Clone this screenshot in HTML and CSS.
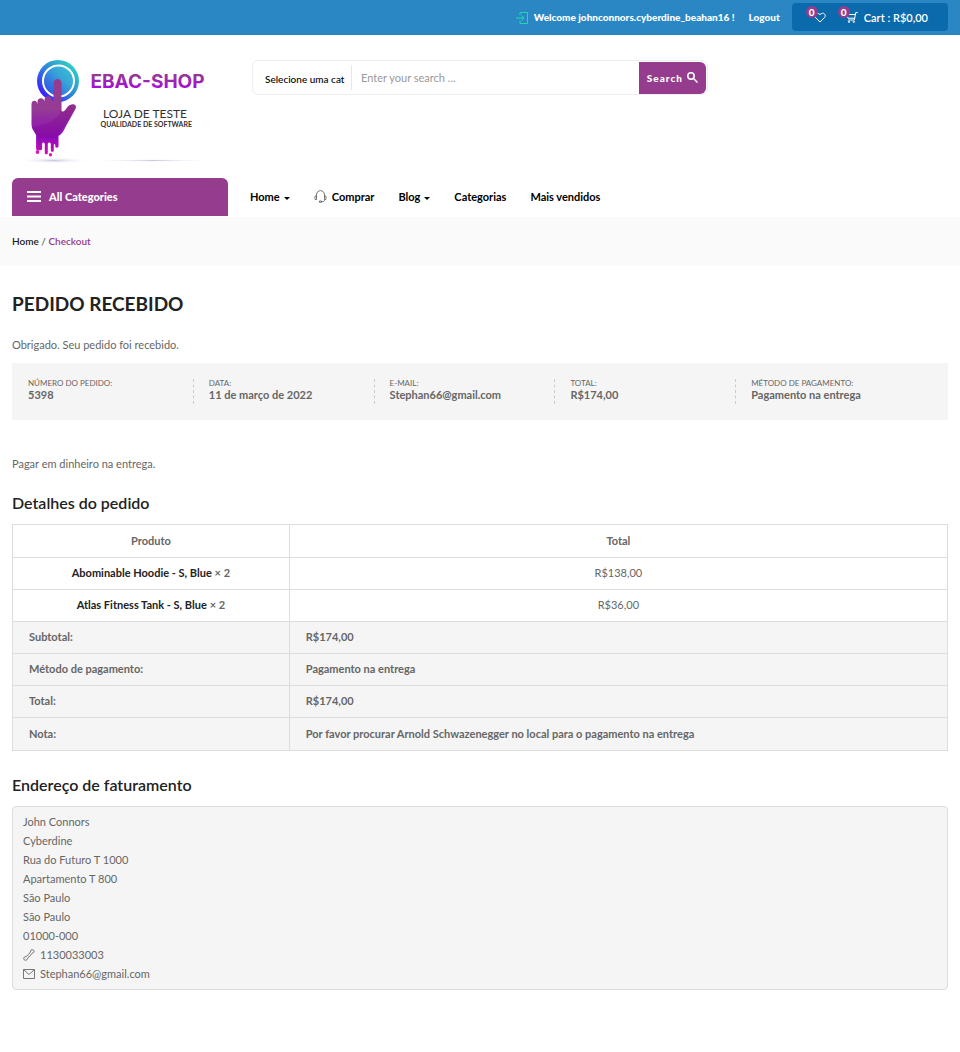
FILE: index.html
```html
<!DOCTYPE html>
<html lang="pt-BR">
<head>
<meta charset="utf-8">
<meta name="viewport" content="width=device-width, initial-scale=1">
<title>Pedido recebido - EBAC-SHOP</title>
<link rel="stylesheet" href="styles.css">
</head>
<body>
<div class="topbar">
  <svg class="login-icon" viewBox="0 0 12 12" aria-hidden="true"><path d="M4 3V.5h7.500v11H4V9M0 6h8M5.500 3.500 8 6 5.500 8.500"/></svg>
  <span class="welcome">Welcome johnconnors.cyberdine_beahan16 !</span>
  <a class="logout" href="#">Logout</a>
  <div class="cart-box">
    <a class="icon-link" href="#" aria-label="Favoritos"><svg class="icon" viewBox="0 0 12 11" aria-hidden="true"><path d="M6 10 1.500 5.600C-.8 3 2.800-1 6 2.700 9.200-1 12.800 3 10.500 5.600z"/></svg><span class="badge">0</span></a>
    <a class="icon-link" href="#" aria-label="Carrinho"><svg class="icon" viewBox="0 0 12 11" aria-hidden="true"><path d="M11.800.6H9.700L8.400 8H2.200M9.300 2.500H.9L2 6.200h6.600"/><circle cx="3" cy="9.800" r=".7"/><circle cx="7.800" cy="9.800" r=".7"/></svg><span class="badge">0</span></a>
    <a class="cart-text" href="#">Cart : R$0,00</a>
  </div>
</div>

<header class="header">
  <div class="logo-col">
    <a href="#" aria-label="EBAC-SHOP">
      <svg class="logo" viewBox="12 50 204 118" role="img" aria-label="EBAC-SHOP Loja de Teste">
        <defs>
          <linearGradient id="ring" x1="0" y1="1" x2="1" y2="0"><stop offset=".1" stop-color="#3a10ff"/><stop offset=".5" stop-color="#2e86dc"/><stop offset="1" stop-color="#2eeaba"/></linearGradient>
          <linearGradient id="disc" x1="0" y1="1" x2="1" y2="0"><stop offset="0" stop-color="#2b40e8"/><stop offset=".6" stop-color="#38a4d8"/><stop offset="1" stop-color="#35c8d0"/></linearGradient>
          <linearGradient id="hand" gradientUnits="userSpaceOnUse" x1="0" y1="80" x2="0" y2="156"><stop offset="0" stop-color="#963c8e"/><stop offset=".38" stop-color="#953b94"/><stop offset=".75" stop-color="#8c0cbc"/><stop offset="1" stop-color="#d80cb0"/></linearGradient>
          <linearGradient id="brand" gradientUnits="userSpaceOnUse" x1="0" y1="74" x2="0" y2="89"><stop offset="0" stop-color="#963c8e"/><stop offset="1" stop-color="#a50ce0"/></linearGradient>
          <radialGradient id="shade"><stop offset="0" stop-color="#c9c7e4"/><stop offset="1" stop-color="#fff" stop-opacity="0"/></radialGradient>
        </defs>
        <ellipse cx="54" cy="160.500" rx="36" ry="3" fill="url(#shade)"/>
        <ellipse cx="153" cy="160.500" rx="62" ry="1.400" fill="url(#shade)"/>
        <circle cx="58" cy="81" r="21" fill="url(#ring)"/>
        <circle cx="58.500" cy="81" r="15.500" fill="url(#disc)" stroke="#fff" stroke-width="2"/>
        <path fill="url(#hand)" d="M31.500 104c0-4.500 5.500-4.500 6 0v-2.500c0-4.500 6.500-4.500 7 0V100c0-5 7-5 7.500 0l1.500 1V83c0-5.500 8-5.500 8 0v28c2 2 4-1 6-4 4-5 10.500-2.500 8 2L66 126c-2.500 5-4 8-7.500 10v10.500c0 1.600-3.200 1.600-3.200 0V145c-.4-1.400-1.200-1.400-1.500 0v5.500c0 1.800-3 1.800-3 0V144c-.5-2-2.500-2-3 0v9c0 1.700-3 1.700-3 0v-9c-.5-2-2.400-2-2.700 0v5c0 1.700-6 1.700-6 0V135l-3.600-6q-1-2-1-5z"/>
        <path fill="#7d087e" opacity=".3" d="M61.500 110C58 120 45 126 32 127l4 7 3.500 4h17l4-7 6-8 8-14c1.500-4-4-5.500-7-2-1.500 3-5 6-7.500 3z"/>
        <circle cx="37.500" cy="152" r="1.900" fill="#da1ab8"/><circle cx="50.500" cy="154.700" r="1.700" fill="#da1ab8"/>
        <text class="brand-text" x="90.500" y="88" fill="url(#brand)">EBAC-SHOP</text>
        <text class="tag-text" x="103" y="118">LOJA DE TESTE</text>
        <text class="sub-text" x="100.500" y="127">QUALIDADE DE SOFTWARE</text>
      </svg>
    </a>
  </div>
  <div class="search-col">
    <form class="search" role="search">
      <select class="category" aria-label="Categoria"><option>Selecione uma cat</option></select>
      <input class="query" type="text" placeholder="Enter your search ..." aria-label="Busca">
      <button class="search-btn" type="button">Search <svg viewBox="0 0 11 11" aria-hidden="true"><circle cx="4" cy="4" r="3.200"/><path d="m6.300 6.300 4.200 4.200"/></svg></button>
    </form>
  </div>
</header>

<nav class="nav">
  <div class="cat-col">
    <button class="categories" type="button"><svg viewBox="0 0 14 11" aria-hidden="true"><path d="M0 1h14M0 5.500h14M0 10h14"/></svg>All Categories</button>
  </div>
  <div class="menu">
    <a class="drop" href="#">Home</a>
    <a class="shop" href="#"><svg viewBox="0 0 13 13" aria-hidden="true"><path d="M2.500 6.500V5C2.500-.8 10.500-.8 10.500 5v1.500M2.500 6H1.200Q.5 7.500 1.200 9.500h1.300zM10.500 6h1.300q.7 1.500 0 3.500h-1.300zM10.700 9.500c0 2-1.200 2.200-3.200 2.200M5.500 11h2v1.300h-2z"/></svg>Comprar</a>
    <a class="drop" href="#">Blog</a>
    <a href="#">Categorias</a>
    <a href="#">Mais vendidos</a>
  </div>
</nav>

<div class="breadcrumb"><a href="#">Home</a> / <span class="current">Checkout</span></div>

<main class="content">
  <h1>PEDIDO RECEBIDO</h1>
  <p class="thanks">Obrigado. Seu pedido foi recebido.</p>
  <ul class="overview">
    <li>Número do pedido:<strong>5398</strong></li>
    <li>Data:<strong>11 de março de 2022</strong></li>
    <li>E-mail:<strong>Stephan66@gmail.com</strong></li>
    <li>Total:<strong>R$174,00</strong></li>
    <li>Método de pagamento:<strong>Pagamento na entrega</strong></li>
  </ul>
  <p class="instructions">Pagar em dinheiro na entrega.</p>

  <h2>Detalhes do pedido</h2>
  <table class="order">
    <thead><tr><th class="product">Produto</th><th>Total</th></tr></thead>
    <tbody>
      <tr><td><a href="#">Abominable Hoodie - S, Blue</a> <b>× 2</b></td><td>R$138,00</td></tr>
      <tr><td><a href="#">Atlas Fitness Tank - S, Blue</a> <b>× 2</b></td><td>R$36,00</td></tr>
    </tbody>
    <tfoot>
      <tr><th>Subtotal:</th><td>R$174,00</td></tr>
      <tr><th>Método de pagamento:</th><td>Pagamento na entrega</td></tr>
      <tr><th>Total:</th><td>R$174,00</td></tr>
      <tr><th>Nota:</th><td>Por favor procurar Arnold Schwazenegger no local para o pagamento na entrega</td></tr>
    </tfoot>
  </table>

  <h2>Endereço de faturamento</h2>
  <address class="address">
    John Connors<br>Cyberdine<br>Rua do Futuro T 1000<br>Apartamento T 800<br>São Paulo<br>São Paulo<br>01000-000
    <div class="contact"><svg viewBox="0 0 12 12" aria-hidden="true"><path d="M8.300.8q1.700-.6 2.700.8.500 1.300-.4 2L8.900 4.400Q7.600 7 5 8.600L4.200 10.500Q2.800 12 1.200 10.800.2 9.500 1 8.300l2.200-.8Q5.800 5.900 7.300 3z"/></svg>1130033003</div>
    <div class="contact"><svg viewBox="0 0 12 12" aria-hidden="true"><path d="M.5 1.500h11v9H.5zl5.500 5 5.500-5"/></svg>Stephan66@gmail.com</div>
  </address>
</main>
</body>
</html>
```
FILE: styles.css
```css
* { box-sizing: border-box; }
body {
  margin: 0;
  background: #fff;
  color: #666;
  font: 11px/19px Lato, "Liberation Sans", sans-serif;
}
a { color: inherit; text-decoration: none; }
button, input, select { font-family: inherit; }
h1, h2, p, ul { margin: 0; padding: 0; }
svg { display: block; }

.topbar {
  display: flex;
  align-items: center;
  justify-content: flex-end;
  height: 35px;
  padding: 0 12px;
  background: #2b87c4;
  color: #fff;
  font-size: 10px;
  font-weight: 900;
}
.login-icon { width: 12px; height: 12px; margin-right: 6px; fill: none; stroke: #1fd9b5; }
.logout { margin-left: 14px; }
.cart-box {
  display: flex;
  align-items: center;
  height: 28px;
  margin: -1px 0 0 12px;
  padding: 0 20px 0 22px;
  border-radius: 4px;
  background: #0a6aab;
}
.icon-link { position: relative; margin-right: 20px; }
.icon-link + .cart-text { margin-left: -14px; }
.icon { width: 12px; height: 11px; fill: none; stroke: #fff; }
.badge {
  position: absolute;
  left: -8px;
  top: -6px;
  width: 12px;
  height: 12px;
  border-radius: 6px;
  background: #963c8e;
  font-size: 10px;
  line-height: 12px;
  text-align: center;
}
.cart-text { font-size: 11px; font-weight: 600; }

.header { display: flex; height: 143px; }
.logo-col, .cat-col { flex: 0 0 25%; padding: 0 12px; }
.logo { width: 204px; height: 118px; margin-top: 15px; }
.brand-text { font: 700 19px Inter, sans-serif; }
.tag-text { font: 12px Lato, sans-serif; fill: #333; }
.sub-text { font: 700 7px Lato, sans-serif; fill: #333; }
.search-col { flex: 0 0 50%; padding: 25px 12px 0; }
.search {
  display: flex;
  align-items: center;
  height: 35px;
  padding: 1px;
  border: 1px solid #eee;
  border-radius: 6px;
}
.category {
  width: 98px;
  height: 25px;
  padding: 2px 0 0 11px;
  border: 0;
  border-right: 1px solid #e8e8e8;
  appearance: none;
  background: #fff;
  color: #000;
  font-size: 10px;
  font-weight: 500;
}
.query { flex: 1; min-width: 0; padding: 0 9px; border: 0; color: #666; font-size: 11px; outline: 0; }
.query::placeholder { color: #999; }
.search-btn {
  display: flex;
  align-items: center;
  gap: 4px;
  height: 32px;
  padding: 0 8px;
  border: 0;
  border-radius: 0 6px 6px 0;
  background: #963c8e;
  color: #fff;
  font-size: 10px;
  font-weight: 900;
  letter-spacing: 1px;
}
.search-btn svg { width: 11px; height: 11px; fill: none; stroke: #fff; stroke-width: 1.500; }

.nav { display: flex; height: 39px; }
.categories {
  display: flex;
  align-items: center;
  gap: 8px;
  width: 100%;
  height: 38px;
  padding: 0 15px 2px;
  border: 0;
  border-radius: 6px 6px 0 0;
  background: #963c8e;
  color: #fff;
  font-size: 11px;
  font-weight: 900;
}
.categories svg { width: 14px; height: 11px; stroke: #fff; stroke-width: 2; }
.menu {
  display: flex;
  align-items: center;
  gap: 24px;
  height: 38px;
  padding: 0 0 2px 10px;
  color: #000;
  font-weight: 700;
  white-space: nowrap;
}
.drop { display: flex; align-items: center; gap: 4px; }
.drop::after {
  content: "";
  margin-top: 4px;
  border: 3px solid transparent;
  border-top-color: #000;
  border-bottom: 0;
}
.shop { display: flex; align-items: center; gap: 5px; }
.shop svg { width: 13px; height: 13px; fill: none; stroke: #555; stroke-width: .8; }

.breadcrumb { height: 49px; padding: 15px 12px; background: #fafafa; font-size: 10px; font-weight: 600; }
.breadcrumb a { color: #222; }
.current { color: #963c8e; }

.content { padding: 24px 12px; }
h1 { color: #222; font-size: 19px; line-height: 28px; font-weight: 700; }
h2 { color: #222; font-size: 16px; line-height: 20px; font-weight: 600; }
.thanks { margin: 17px 0 9px; }
.overview {
  display: grid;
  grid-template-columns: repeat(5, 1fr);
  padding: 16px 32px 16px 0;
  background: #f5f5f5;
  list-style: none;
}
.overview li {
  height: 25px;
  padding-left: 15px;
  border-left: 1px dashed #ccc;
  font-size: 8px;
  line-height: 9px;
  text-transform: uppercase;
}
.overview li:first-child { border-left-color: transparent; }
.overview strong { display: block; font-size: 11px; line-height: 14px; font-weight: 700; text-transform: none; }
.instructions { margin: 34px 0 20px; }
.order {
  width: 100%;
  margin: 11px 0 24px;
  border-collapse: collapse;
  table-layout: fixed;
  text-align: center;
}
.order th, .order td { height: 32px; padding: 0 16px 2px; border: 1px solid #ddd; }
.order th, .order b, .order tfoot td { font-weight: 700; }
.order thead th { height: 33px; }
.order .product { width: 29.600%; }
.order a { color: #222; font-weight: 700; }
.order tfoot { background: #f5f5f5; text-align: left; }
.order tfoot tr:last-child > * { height: 33px; }
.address {
  margin-top: 11px;
  padding: 5px 10px 6px;
  border: 1px solid #ddd;
  border-radius: 4px;
  background: #f5f5f5;
  font-style: normal;
}
.contact { display: flex; align-items: center; gap: 5px; }
.contact svg { width: 12px; height: 12px; fill: none; stroke: #777; }
```
